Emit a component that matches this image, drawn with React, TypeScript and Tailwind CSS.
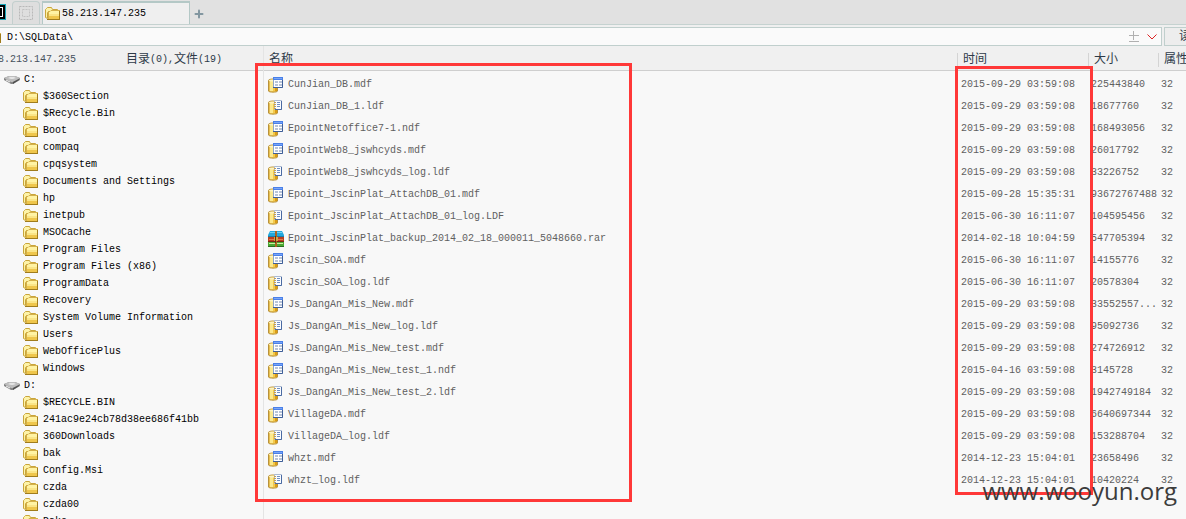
import React, { useState } from 'react';
import { Plus } from 'lucide-react';

type FileKind = 'data' | 'log' | 'rar';

interface FileEntry {
  name: string;
  kind: FileKind;
  time: string;
  size: string;
}

interface Drive {
  name: string;
  folders: string[];
}

const drives: Drive[] = [
  {
    name: 'C:',
    folders: [
      '$360Section',
      '$Recycle.Bin',
      'Boot',
      'compaq',
      'cpqsystem',
      'Documents and Settings',
      'hp',
      'inetpub',
      'MSOCache',
      'Program Files',
      'Program Files (x86)',
      'ProgramData',
      'Recovery',
      'System Volume Information',
      'Users',
      'WebOfficePlus',
      'Windows',
    ],
  },
  {
    name: 'D:',
    folders: [
      '$RECYCLE.BIN',
      '241ac9e24cb78d38ee686f41bb',
      '360Downloads',
      'bak',
      'Config.Msi',
      'czda',
      'czda00',
      'Dake',
    ],
  },
];

const files: FileEntry[] = [
  { name: 'CunJian_DB.mdf', kind: 'data', time: '2015-09-29 03:59:08', size: '225443840' },
  { name: 'CunJian_DB_1.ldf', kind: 'log', time: '2015-09-29 03:59:08', size: '18677760' },
  { name: 'EpointNetoffice7-1.ndf', kind: 'data', time: '2015-09-29 03:59:08', size: '168493056' },
  { name: 'EpointWeb8_jswhcyds.mdf', kind: 'data', time: '2015-09-29 03:59:08', size: '26017792' },
  { name: 'EpointWeb8_jswhcyds_log.ldf', kind: 'log', time: '2015-09-29 03:59:08', size: '33226752' },
  { name: 'Epoint_JscinPlat_AttachDB_01.mdf', kind: 'data', time: '2015-09-28 15:35:31', size: '93672767488' },
  { name: 'Epoint_JscinPlat_AttachDB_01_log.LDF', kind: 'log', time: '2015-06-30 16:11:07', size: '104595456' },
  { name: 'Epoint_JscinPlat_backup_2014_02_18_000011_5048660.rar', kind: 'rar', time: '2014-02-18 10:04:59', size: '547705394' },
  { name: 'Jscin_SOA.mdf', kind: 'data', time: '2015-06-30 16:11:07', size: '14155776' },
  { name: 'Jscin_SOA_log.ldf', kind: 'log', time: '2015-06-30 16:11:07', size: '20578304' },
  { name: 'Js_DangAn_Mis_New.mdf', kind: 'data', time: '2015-09-29 03:59:08', size: '33552557...' },
  { name: 'Js_DangAn_Mis_New_log.ldf', kind: 'log', time: '2015-09-29 03:59:08', size: '95092736' },
  { name: 'Js_DangAn_Mis_New_test.mdf', kind: 'data', time: '2015-09-29 03:59:08', size: '274726912' },
  { name: 'Js_DangAn_Mis_New_test_1.ndf', kind: 'data', time: '2015-04-16 03:59:08', size: '3145728' },
  { name: 'Js_DangAn_Mis_New_test_2.ldf', kind: 'log', time: '2015-09-29 03:59:08', size: '1942749184' },
  { name: 'VillageDA.mdf', kind: 'data', time: '2015-09-29 03:59:08', size: '6640697344' },
  { name: 'VillageDA_log.ldf', kind: 'log', time: '2015-09-29 03:59:08', size: '153288704' },
  { name: 'whzt.mdf', kind: 'data', time: '2014-12-23 15:04:01', size: '23658496' },
  { name: 'whzt_log.ldf', kind: 'log', time: '2014-12-23 15:04:01', size: '10420224' },
];

function FolderIcon() {
  return (
    <svg width="16" height="16" viewBox="0 0 16 16" className="shrink-0" aria-hidden="true">
      <path d="M.5 11.5v-8l1-1 1-1h4l1 2h5v3h-10v6z" fill="#fdf3a8" stroke="#c9a53a" />
      <path d="M3 5h12v8H3z" fill="#fae588" />
      <path d="M4 5h10v3H4z" fill="#fff3a4" />
      <path d="M4 10h10v3H4z" fill="#efc64c" />
      <path d="M3.500 5v8M3 5.500h2l1-1h9" fill="none" stroke="#d4b04a" />
      <path d="M14.500 5v9M2 13.500h13" stroke="#a07c1c" />
    </svg>
  );
}

function DriveIcon() {
  return (
    <svg width="16" height="10" viewBox="0 0 16 10" className="shrink-0" aria-hidden="true">
      <path d="M0 3 5 1h6l5 2v2L9 9H7L0 5z" fill="#858585" />
      <path d="M0 3 5 1h6l5 2-7 4H7z" fill="#bdbdbd" />
      <path d="M4 3l2-1h4l2 1-3 1H7z" fill="#e4e4e4" />
      <path d="M9 7l6-3v1L9 9z" fill="#505050" />
      <path d="M2 5l4 2" stroke="#f0f0f0" />
    </svg>
  );
}

function Cylinder() {
  return (
    <>
      <path d="M.5 3.500C.5 1.500 9.500 1.500 9.500 3.500v10.500c0 1.500-9 1.500-9 0z" fill="#f3c94c" stroke="#b8923c" />
      <path d="M1 4h1v10H1z" fill="#e8c050" />
      <path d="M2 4h3v10H2z" fill="#fbe98e" />
      <path d="M7 4h2v10H7z" fill="#dc9c14" />
      <ellipse cx="5" cy="3.500" rx="4" ry="1" fill="#fdf3c4" />
    </>
  );
}

function FileIcon({ kind }: { kind: FileKind }) {
  if (kind === 'rar') {
    return (
      <svg width="16" height="16" viewBox="0 0 16 16" className="shrink-0" aria-hidden="true">
        <path d="M2 0h12l2 4v2H0V4z" fill="#22a7dc" />
        <path d="M2 1.500h12" stroke="#6fd0f2" />
        <path d="M0 5.500h16" stroke="#1c7ca8" />
        <path d="M0 6h16v5H0z" fill="#b9401f" />
        <path d="M1 8.500h14" stroke="#e07a4c" />
        <path d="M0 10.500h16" stroke="#7c2412" />
        <path d="M0 11h16v4l-1 1H1l-1-1z" fill="#4aa832" />
        <path d="M1 12.500h14" stroke="#cdeba0" />
        <path d="M0 15.500h16" stroke="#2a6e20" />
        <path d="M7 0h2v16H7z" fill="#a8641f" />
        <path d="M6 6h4v4H6z" fill="#d8a040" />
        <path d="M7.500 5v7" stroke="#5c3210" />
      </svg>
    );
  }

  return (
    <svg width="16" height="16" viewBox="0 0 16 16" className="shrink-0" aria-hidden="true">
      <Cylinder />
      {kind === 'data' ? (
        <>
          <path d="M5.500.5h9v10h-9z" fill="#ffffff" stroke="#8ea6cc" />
          <path d="M5 0h10v3H5z" fill="#4a80e8" />
          <path d="M6 1.500h8" stroke="#7aa6f6" />
          <path d="M7 4h3v2H7zM11 4h3v2h-3zM7 7h3v2H7zM11 7h3v2h-3z" fill="#b8c4d8" />
          <path d="M5 10.500h9.500V3" fill="none" stroke="#3f5f98" />
        </>
      ) : (
        <>
          <path d="M6.500 1.500h7v9h-7z" fill="#fafcff" stroke="#a9b8d0" />
          <path d="M9 3.500h3M9 5.500h3M9 7.500h3" stroke="#6f8fc4" />
          <path d="M6 3.500h2M6 5.500h2M6 7.500h2M6 9.500h2" stroke="#c8a04a" />
          <path d="M7 10.500h6.500V2" fill="none" stroke="#4a6aa2" />
        </>
      )}
    </svg>
  );
}

function TabBar() {
  return (
    <div className="flex h-6 items-end bg-[#e1e1e1]">
      <button aria-label="主机" className="mb-1 flex h-4 w-1.5 items-center border border-l-0 border-[#19a5b8] bg-black">
        <span className="block h-2.5 w-[3px] border border-l-0 border-white" />
      </button>
      <button
        aria-label="新标签"
        className="ml-1.5 flex h-[23px] w-7 items-center justify-center rounded-t-sm border border-b-0 border-[#c3cfce] bg-[#dedede]"
      >
        <svg width="14" height="14" viewBox="0 0 14 14" aria-hidden="true">
          <path d="M.5.5h13v13H.5z" fill="none" stroke="#b8b8b8" strokeDasharray="2 1" />
          <path d="M3.500 3.500h7v7h-7z" fill="none" stroke="#c2c2c2" strokeDasharray="2 1" />
        </svg>
      </button>
      <button className="ml-0.5 flex h-[23px] w-[148px] items-center gap-px border border-t-2 border-b-0 border-[#b4c8c6] bg-[#efefef] pl-0.5 text-black">
        <FolderIcon />
        <span>58.213.147.235</span>
      </button>
      <button aria-label="添加" className="mb-1 ml-[3px] text-[#8296a0]">
        <Plus size={12} strokeWidth={4} />
      </button>
    </div>
  );
}

function AddressBar() {
  const [path, setPath] = useState('D:\\SQLData\\');

  return (
    <div className="flex h-[22px] gap-0.5 border-t border-[#c5d2d0] bg-[#efefef] pt-0.5 text-black">
      <div className="flex flex-1 items-center border border-l-0 border-[#c0cfcd] bg-[#fafafa]">
        <span className="flex w-0.5 justify-end overflow-hidden">
          <FolderIcon />
        </span>
        <input
          aria-label="路径"
          value={path}
          onChange={(e) => setPath(e.target.value)}
          className="min-w-0 flex-1 bg-transparent pt-0.5 pl-[5px] outline-none"
        />
        <button aria-label="调整" className="mr-2 text-[#b0b0b0]">
          <svg width="10" height="12" viewBox="0 0 10 12" aria-hidden="true">
            <path d="M0 4.500h10M4.500 0v9M0 10.500h10" stroke="currentColor" />
          </svg>
        </button>
        <button aria-label="历史" className="mr-1 text-[#d22]">
          <svg width="10" height="6" viewBox="0 0 10 6" aria-hidden="true">
            <path d="M.5.5 5 5 9.500.5" fill="none" stroke="currentColor" />
          </svg>
        </button>
      </div>
      <button className="w-[22px] overflow-hidden border border-r-0 border-[#c0cfcd] bg-[#ededed] pl-3.5 text-left text-xs leading-4 whitespace-nowrap text-[#2e3a48]">
        读取
      </button>
    </div>
  );
}

function FolderTree() {
  return (
    <ul className="text-black">
      {drives.map((drive) => (
        <li key={drive.name}>
          <div className="flex h-[17px] items-center gap-1 pl-1">
            <DriveIcon />
            <span>{drive.name}</span>
          </div>
          <ul>
            {drive.folders.map((folder) => (
              <li key={folder} className="flex h-[17px] items-center gap-1 pl-[23px] whitespace-nowrap">
                <FolderIcon />
                <span>{folder}</span>
              </li>
            ))}
          </ul>
        </li>
      ))}
    </ul>
  );
}

function FileTable() {
  return (
    <table className="w-full table-fixed border-separate border-spacing-0 text-left whitespace-nowrap text-[#606060]">
      <colgroup>
        <col />
        <col className="w-[131px]" />
        <col className="w-[70px]" />
        <col className="w-[28px]" />
      </colgroup>
      <thead className="bg-[#f0f0f0] text-xs text-[#2e3a48]">
        <tr className="h-[25px]">
          <th className="border-b border-[#cfcfcf] p-0 pt-1 pl-[5px] font-normal">名称</th>
          {['时间', '大小', '属性'].map((label) => (
            <th key={label} className="overflow-hidden border-b border-[#cfcfcf] p-0 pt-1 font-normal">
              <span className="block h-3.5 border-l border-[#d4d4d4] pl-[5px] leading-3.5">{label}</span>
            </th>
          ))}
        </tr>
      </thead>
      <tbody className="before:block before:h-[3px]">
        {files.map((file) => (
          <tr key={file.name} className="h-[22px]">
            <td className="p-0 pl-1">
              <div className="flex items-center gap-1">
                <FileIcon kind={file.kind} />
                <span>{file.name}</span>
              </div>
            </td>
            <td className="p-0 pl-1">{file.time}</td>
            <td className="p-0 pl-[3px]">{file.size}</td>
            <td className="p-0 pl-[3px]">32</td>
          </tr>
        ))}
      </tbody>
    </table>
  );
}

export default function App() {
  return (
    <div className="relative flex h-screen flex-col overflow-hidden bg-[#f8f8f8] font-['Liberation_Mono','Noto_Sans_CJK_SC',monospace] text-[10px] leading-4">
      <TabBar />
      <AddressBar />

      <div className="flex min-h-0 flex-1">
        <aside className="w-[263px] shrink-0 overflow-hidden">
          <div className="flex h-[25px] items-center border-b border-[#cfcfcf] bg-[#f0f0f0] pt-1 text-[#46505c]">
            <div className="flex w-[126px] overflow-hidden">
              <span className="-ml-0.5">8.213.147.235</span>
            </div>
            <div className="flex items-center text-[#2e3a48]">
              <span className="text-xs">目录</span>
              <span>(0),</span>
              <span className="text-xs">文件</span>
              <span>(19)</span>
            </div>
          </div>
          <FolderTree />
        </aside>
        <main className="min-w-0 flex-1 overflow-hidden border-l border-[#e4e4e4]">
          <FileTable />
        </main>
      </div>

      {/* Marked areas */}
      <div className="pointer-events-none absolute top-[63px] left-[255px] h-[439px] w-[377px] border-3 border-[#ff3838]" />
      <div className="pointer-events-none absolute top-[66px] right-[93px] h-[429px] w-[138px] border-3 border-[#ff3838]" />

      {/* Watermark */}
      <div className="pointer-events-none absolute right-[9px] bottom-3 font-['Open_Sans',sans-serif] text-2xl leading-8 text-[#3c3c3c]">
        www.wooyun.org
      </div>
    </div>
  );
}
